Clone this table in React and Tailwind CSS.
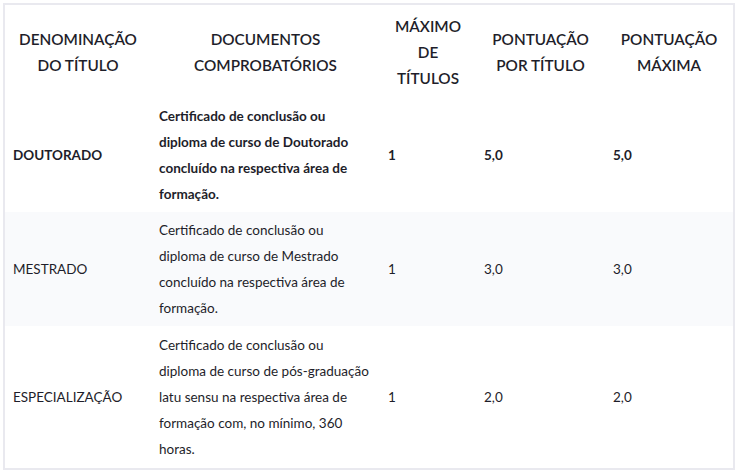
const rows = [
  {
    name: "DOUTORADO",
    docs: ["Certificado de conclusão ou", "diploma de curso de Doutorado", "concluído na respectiva área de", "formação."],
    max: "1",
    per: "5,0",
    total: "5,0",
    bold: true,
  },
  {
    name: "MESTRADO",
    docs: ["Certificado de conclusão ou", "diploma de curso de Mestrado", "concluído na respectiva área de", "formação."],
    max: "1",
    per: "3,0",
    total: "3,0",
  },
  {
    name: "ESPECIALIZAÇÃO",
    docs: [
      "Certificado de conclusão ou",
      "diploma de curso de pós-graduação",
      "latu sensu na respectiva área de",
      "formação com, no mínimo, 360",
      "horas.",
    ],
    max: "1",
    per: "2,0",
    total: "2,0",
    last: true,
  },
];

export default function App() {
  return (
    <div className="w-[738px] h-[476px] bg-white p-[3px] font-['Lato','Liberation_Sans',sans-serif] text-[#1e1e2a]">
      <div className="border-2 border-[#e9e9ef]">
        <table className="w-full table-fixed">
          <colgroup>
            <col className="w-[146px]" />
            <col className="w-[229px]" />
            <col className="w-[96px]" />
            <col className="w-[129px]" />
            <col />
          </colgroup>
          <thead>
            <tr className="text-[15.3px] leading-[26px] font-semibold uppercase">
              <th className="px-2 pt-[8px] pb-[7px] text-center align-middle font-semibold">
                Denominação
                <br />
                do título
              </th>
              <th className="px-2 pt-[8px] pb-[7px] text-center align-middle font-semibold">
                Documentos
                <br />
                comprobatórios
              </th>
              <th className="px-2 pt-[8px] pb-[7px] text-center align-middle font-semibold">
                Máximo
                <br />
                de
                <br />
                títulos
              </th>
              <th className="px-2 pt-[8px] pb-[7px] text-center align-middle font-semibold">
                Pontuação
                <br />
                por título
              </th>
              <th className="px-2 pt-[8px] pb-[7px] text-center align-middle font-semibold">
                Pontuação
                <br />
                máxima
              </th>
            </tr>
          </thead>
          <tbody>
            {rows.map((r, i) => (
              <tr
                key={r.name}
                className={`text-[13.5px] leading-[26px] ${i % 2 === 1 ? "bg-[#f9fafc]" : ""} ${r.bold ? "font-bold" : ""}`}
              >
                <td className={`px-2 align-middle ${r.last ? "py-[6px]" : "py-[5px]"}`}>{r.name}</td>
                <td className={`px-2 align-middle whitespace-nowrap ${r.last ? "py-[6px]" : "py-[5px]"}`}>
                  {r.docs.map((d) => (
                    <div key={d}>{d}</div>
                  ))}
                </td>
                <td className={`px-2 align-middle ${r.last ? "py-[6px]" : "py-[5px]"}`}>{r.max}</td>
                <td className={`px-2 align-middle ${r.last ? "py-[6px]" : "py-[5px]"}`}>{r.per}</td>
                <td className={`px-2 align-middle ${r.last ? "py-[6px]" : "py-[5px]"}`}>{r.total}</td>
              </tr>
            ))}
          </tbody>
        </table>
      </div>
    </div>
  );
}
